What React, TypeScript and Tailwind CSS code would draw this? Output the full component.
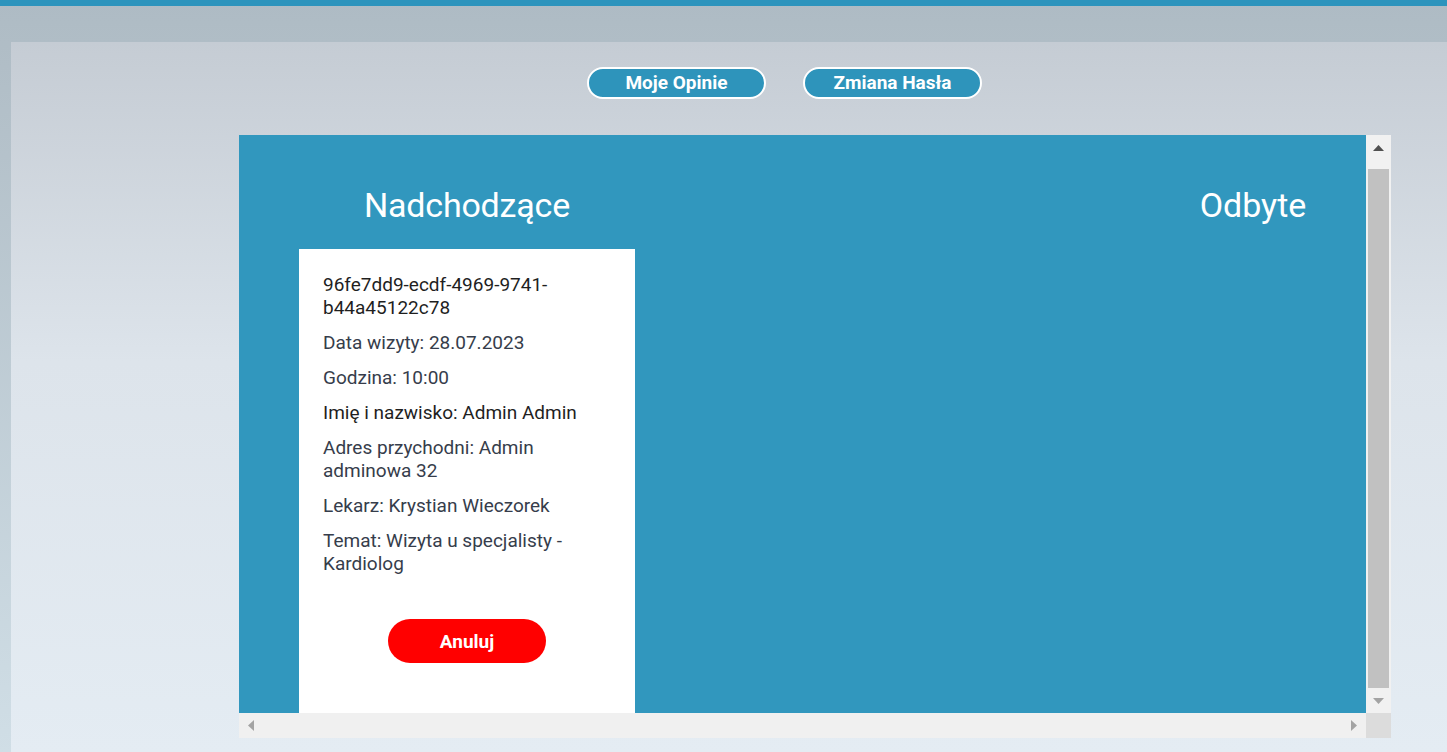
import React from "react";

const dark = "text-[#1f1f1f]";
const gray = "text-[#363d4b]";

function Up() {
  return (
    <svg width="11" height="6" viewBox="0 0 11 6"><polygon points="5.5,0 11,6 0,6" fill="#505050" /></svg>
  );
}
function Down() {
  return (
    <svg width="11" height="6" viewBox="0 0 11 6"><polygon points="0,0 11,0 5.5,6" fill="#a3a3a3" /></svg>
  );
}
function Left() {
  return (
    <svg width="6" height="11" viewBox="0 0 6 11"><polygon points="6,0 6,11 0,5.5" fill="#a3a3a3" /></svg>
  );
}
function Right() {
  return (
    <svg width="6" height="11" viewBox="0 0 6 11"><polygon points="0,0 6,5.5 0,11" fill="#a3a3a3" /></svg>
  );
}

export default function App() {
  return (
    <div
      className="w-[1447px] h-[752px] overflow-hidden flex flex-col bg-gradient-to-b from-[#aebbc4] to-[#d0dee6]"
      style={{ fontFamily: "Roboto, 'Noto Sans', sans-serif" }}
    >
      <div className="h-[6px] bg-[#2d94bd] shrink-0" />
      <div className="h-[36px] shrink-0" />
      <div className="ml-[11px] flex-1 bg-gradient-to-b from-[#c5ccd4] via-[#dde4eb] via-45% to-[#e4ecf3] flex flex-col">
        <div className="flex pt-[25px] pl-[576px] gap-[37px]">
          <button className="w-[179px] h-[32px] rounded-full border-2 border-white bg-[#2e94bb] text-white font-bold text-[19px] leading-none pb-[2px]">
            Moje Opinie
          </button>
          <button className="w-[179px] h-[32px] rounded-full border-2 border-white bg-[#2e94bb] text-white font-bold text-[19px] leading-none pb-[2px]">
            Zmiana Hasła
          </button>
        </div>
        <div className="mt-[36px] ml-[228px] w-[1152px] h-[603px] flex flex-col">
          <div className="flex h-[578px]">
            <div className="w-[1127px] bg-[#3197be] overflow-hidden flex">
              <div className="ml-[60px] w-[336px] shrink-0 flex flex-col items-center">
                <h2 className="mt-[52px] h-[36px] text-white text-[34px] leading-[36px] tracking-[-0.2px]">Nadchodzące</h2>
                <div className="mt-[26px] w-[336px] flex-1 bg-white px-[24px] pt-[24px] flex flex-col text-[19px] leading-[23px]">
                  <p className={dark}>96fe7dd9-ecdf-4969-9741-<br />b44a45122c78</p>
                  <p className={`${gray} mt-[12px]`}>Data wizyty: 28.07.2023</p>
                  <p className={`${gray} mt-[12px]`}>Godzina: 10:00</p>
                  <p className={`${dark} mt-[12px]`}>Imię i nazwisko: Admin Admin</p>
                  <p className={`${gray} mt-[12px]`}>Adres przychodni: Admin<br />adminowa 32</p>
                  <p className={`${gray} mt-[12px]`}>Lekarz: Krystian Wieczorek</p>
                  <p className={`${gray} mt-[12px]`}>Temat: Wizyta u specjalisty -<br />Kardiolog</p>
                  <div className="flex justify-center mt-[44px]">
                    <button className="w-[158px] h-[44px] rounded-full bg-[#ff0000] text-white font-bold text-[19px]">
                      Anuluj
                    </button>
                  </div>
                </div>
              </div>
              <div className="ml-[450px] w-[336px] shrink-0 flex flex-col items-center">
                <h2 className="mt-[52px] h-[36px] text-white text-[34px] leading-[36px]">Odbyte</h2>
              </div>
            </div>
            <div className="w-[25px] bg-[#f1f1f1] flex flex-col items-center">
              <div className="h-[25px] w-full flex items-center justify-center pt-[1px]"><Up /></div>
              <div className="mt-[9px] h-[519px] w-[21px] bg-[#c1c1c1]" />
              <div className="h-[25px] w-full flex items-center justify-center"><Down /></div>
            </div>
          </div>
          <div className="flex h-[25px]">
            <div className="w-[1127px] bg-[#f0f0f0] flex items-center justify-between px-[9px]">
              <Left />
              <Right />
            </div>
            <div className="w-[25px] bg-[#dcdcdc]" />
          </div>
        </div>
      </div>
    </div>
  );
}
